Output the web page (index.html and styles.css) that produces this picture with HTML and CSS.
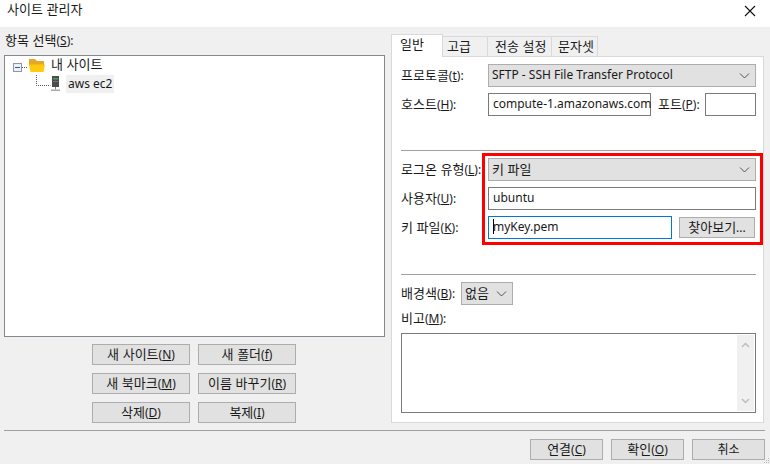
FILE: index.html
```html
<!DOCTYPE html>
<html lang="ko">
<head>
<meta charset="utf-8">
<title>사이트 관리자</title>
<link rel="stylesheet" href="styles.css">
</head>
<body>
<div class="dialog">
  <header class="titlebar">
    <span class="k">사이트 관리자</span>
    <svg class="close" width="12" height="12" viewBox="0 0 12 12"><path d="M1 1l10 10M11 1L1 11" stroke="#111" stroke-width="1.1" fill="none"/></svg>
  </header>
  <div class="main">
    <section class="left">
      <div class="tree-label"><span class="k">항목 선택</span>(<u>S</u>):</div>
      <div class="tree">
        <svg class="connectors" width="60" height="40" viewBox="0 0 60 40"><path d="M17 11.500h6M31.500 19v10.500h14" stroke="#555" stroke-dasharray="1 1" fill="none"/></svg>
        <div class="tree-row root">
          <svg class="expander" width="9" height="9" viewBox="0 0 9 9"><rect x=".5" y=".5" width="8" height="8" fill="#eef0f5" stroke="#8f96a8"/><path d="M2 4.500h5" stroke="#2f5f9f"/></svg>
          <svg class="folder" width="16" height="13" viewBox="0 0 16 13"><path d="M0 0h6l2 2h7v4H0z" fill="#e5a727"/><path d="M1.500 13L0 5.500h16L14.500 13z" fill="#ffc90e"/></svg>
          <span class="root-text k">내 사이트</span>
        </div>
        <div class="tree-row child">
          <svg class="server" width="9" height="15" viewBox="0 0 9 15"><rect x="1" y="0" width="7" height="11" fill="#4c4c4c"/><rect x="2" y="2" width="5" height="1.500" fill="#4f9d5e"/><rect x="2" y="5" width="5" height="1" fill="#777"/><rect x="4" y="11" width="1" height="2.500" fill="#5a8fc8"/><rect x="0" y="13.500" width="9" height="1.500" fill="#a8a8a8"/></svg>
          <span class="selected">aws ec2</span>
        </div>
      </div>
      <div class="site-buttons">
        <button class="btn"><span class="k">새 사이트</span>(<u>N</u>)</button>
        <button class="btn"><span class="k">새 폴더</span>(<u>f</u>)</button>
        <button class="btn"><span class="k">새 북마크</span>(<u>M</u>)</button>
        <button class="btn"><span class="k">이름 바꾸기</span>(<u>R</u>)</button>
        <button class="btn"><span class="k">삭제</span>(<u>D</u>)</button>
        <button class="btn"><span class="k">복제</span>(<u>I</u>)</button>
      </div>
    </section>
    <section class="right">
      <nav class="tabs">
        <div class="tab active k">일반</div>
        <div class="tab t2 k">고급</div>
        <div class="tab t3 k">전송 설정</div>
        <div class="tab t4 k">문자셋</div>
      </nav>
      <div class="panel">
        <div class="row first">
          <label class="lbl"><span class="k">프로토콜</span>(<u>t</u>):</label>
          <div class="select grow"><span>SFTP - SSH File Transfer Protocol</span><svg class="chev" width="11" height="6" viewBox="0 0 11 6"><path d="M1 .5l4.500 4.500L10 .5" stroke="#555" fill="none"/></svg></div>
        </div>
        <div class="row host">
          <label class="lbl"><span class="k">호스트</span>(<u>H</u>):</label>
          <div class="input host-input">compute-1.amazonaws.com</div>
          <label class="port-lbl"><span class="k">포트</span>(<u>P</u>):</label>
          <div class="input port-input"></div>
        </div>
        <hr class="rule rule-a">
        <div class="row">
          <label class="lbl"><span class="k">로그온 유형</span>(<u>L</u>):</label>
          <div class="select grow"><span class="k">키 파일</span><svg class="chev" width="11" height="6" viewBox="0 0 11 6"><path d="M1 .5l4.500 4.500L10 .5" stroke="#555" fill="none"/></svg></div>
        </div>
        <div class="row gap6">
          <label class="lbl"><span class="k">사용자</span>(<u>U</u>):</label>
          <div class="input grow">ubuntu</div>
        </div>
        <div class="row gap6">
          <label class="lbl"><span class="k">키 파일</span>(<u>K</u>):</label>
          <div class="input key-input"><i class="caret"></i>myKey.pem</div>
          <button class="btn browse"><span class="k">찾아보기</span>...</button>
        </div>
        <hr class="rule rule-b">
        <div class="row bg-row">
          <label><span class="k">배경색</span>(<u>B</u>):</label>
          <div class="select bg-select"><span class="k">없음</span><svg class="chev" width="11" height="6" viewBox="0 0 11 6"><path d="M1 .5l4.500 4.500L10 .5" stroke="#555" fill="none"/></svg></div>
        </div>
        <div class="memo-label"><span class="k">비고</span>(<u>M</u>):</div>
        <div class="memo">
          <div class="scrollbar">
            <svg width="9" height="6" viewBox="0 0 9 6"><path d="M1 5l3.500-3.500L8 5" stroke="#bdbdbd" stroke-width="1.500" fill="none"/></svg>
            <svg width="9" height="6" viewBox="0 0 9 6"><path d="M1 1l3.500 3.500L8 1" stroke="#bdbdbd" stroke-width="1.500" fill="none"/></svg>
          </div>
        </div>
        <div class="highlight"></div>
      </div>
    </section>
  </div>
  <footer class="footer">
    <button class="btn foot"><span class="k">연결</span>(<u>C</u>)</button>
    <button class="btn foot"><span class="k">확인</span>(<u>O</u>)</button>
    <button class="btn foot k">취소</button>
    <svg class="grip" width="6" height="6" viewBox="0 0 6 6"><path d="M4 0h1v1H4zM2 2h1v1H2zM4 2h1v1H4zM0 4h1v1H0zM2 4h1v1H2zM4 4h1v1H4z" fill="#bbb"/></svg>
  </footer>
</div>
</body>
</html>
```
FILE: styles.css
```css
* { box-sizing: border-box; }
html, body { margin: 0; padding: 0; }
body {
  width: 770px; height: 464px; overflow: hidden;
  background: #f0f0f0; color: #1a1a1a;
  font: 12px/16px "Noto Sans", "Noto Sans CJK KR", sans-serif;
}
u { text-underline-offset: 1px; }
.k { font-size: 13px; line-height: 16px; font-family: "Noto Sans CJK KR", sans-serif; }
.dialog { width: 770px; height: 464px; display: flex; flex-direction: column; position: relative; }
.titlebar { height: 27px; flex: none; background: #fff; padding: 1px 14px 0 7px; display: flex; justify-content: space-between; align-items: flex-start; }
.close { margin-top: 4px; }
.main { height: 403px; flex: none; display: flex; gap: 6px; padding-left: 4px; }
.left { width: 381px; flex: none; }
.tree-label { height: 28px; padding: 5px 0 0 1px; }
.tree { position: relative; height: 282px; background: #fff; border: 1px solid #828790; padding: 3px 0 0 8px; }
.connectors { position: absolute; left: 0; top: 0; }
.tree-row { display: flex; align-items: flex-start; position: relative; }
.tree-row.root { height: 16px; }
.expander { flex: none; margin-top: 4px; }
.folder { margin: 0 6px 0 7px; flex: none; }
.root-text { margin-top: -3px; }
.tree-row.child { height: 18px; padding-left: 38px; }
.server { flex: none; margin: 1px 6px 0 0; }
.selected { background: #f0f0f0; padding: 0 2px; line-height: 17px; height: 18px; }
.site-buttons { display: grid; grid-template-columns: 98px 98px; gap: 8px; justify-content: start; margin: 7px 0 0 88px; }
.btn { height: 21px; padding: 0; background: #e1e1e1; border: 1px solid #adadad; color: #1a1a1a; font: inherit; display: block; text-align: center; line-height: 18px; }
.right { width: 373px; flex: none; padding-top: 6px; }
.tabs { display: flex; height: 23px; align-items: flex-end; }
.tab { height: 20px; background: #f0f0f0; border: 1px solid #d9d9d9; border-left: 0; border-bottom: 0; line-height: 18px; white-space: nowrap; }
.tab.active { width: 52px; height: 23px; background: #fff; border-left: 1px solid #d9d9d9; position: relative; z-index: 1; margin-bottom: -1px; line-height: 18px; padding-left: 8px; }
.t2 { width: 45px; padding-left: 4px; }
.t3 { width: 64px; padding-left: 7px; }
.t4 { width: 46px; padding-left: 6px; }
.panel { position: relative; height: 367px; background: #fff; border: 1px solid #d9d9d9; padding: 7px 7px 0 9px; }
.row { display: flex; align-items: center; height: 23px; }
.host { margin-top: 6px; }
.gap6 { margin-top: 6px; }
.lbl { width: 87px; flex: none; white-space: nowrap; }
.grow { flex: 1; }
.select { height: 23px; background: #e1e1e1; border: 1px solid #adadad; display: flex; align-items: center; justify-content: space-between; padding: 0 4px 1px 3px; }
.chev { flex: none; margin: 1px 1px 0 0; }
.input { height: 23px; background: #fff; border: 1px solid #7a7a7a; padding: 0 4px; line-height: 20px; white-space: nowrap; }
.host-input { width: 163px; }
.port-lbl { width: 54px; flex: none; padding-left: 7px; white-space: nowrap; }
.port-input { width: 51px; }
.key-input { width: 184px; border-color: #0078d7; position: relative; }
.caret { display: inline-block; width: 1px; height: 15px; background: #000; vertical-align: -3px; margin-right: -1px; }
.browse { width: 76px; margin-left: 7px; }
.rule { border: 0; height: 1px; background: #a0a0a0; margin: 0; }
.rule-a { margin: 34px 0 7px; }
.rule-b { margin: 35px 0 7px; }
.bg-row label { width: 60px; flex: none; white-space: nowrap; }
.bg-select { width: 52px; }
.memo-label { margin-top: 3px; height: 23px; padding-top: 2px; }
.memo { height: 80px; border: 1px solid #7a7a7a; background: #fff; margin-top: 2px; display: flex; justify-content: flex-end; padding: 1px; }
.scrollbar { width: 17px; background: #f0f0f0; display: flex; flex-direction: column; justify-content: space-between; align-items: center; padding: 7px 0; }
.highlight { position: absolute; left: 90px; top: 96px; width: 281px; height: 92px; border: 3px solid #f00; pointer-events: none; }
.footer { position: relative; flex: 1; border-top: 1px solid #a0a0a0; margin: 0 5px 0 4px; display: flex; justify-content: flex-end; gap: 8px; padding-top: 8px; }
.foot { width: 73px; }
.grip { position: absolute; right: -5px; bottom: 0; }
```
